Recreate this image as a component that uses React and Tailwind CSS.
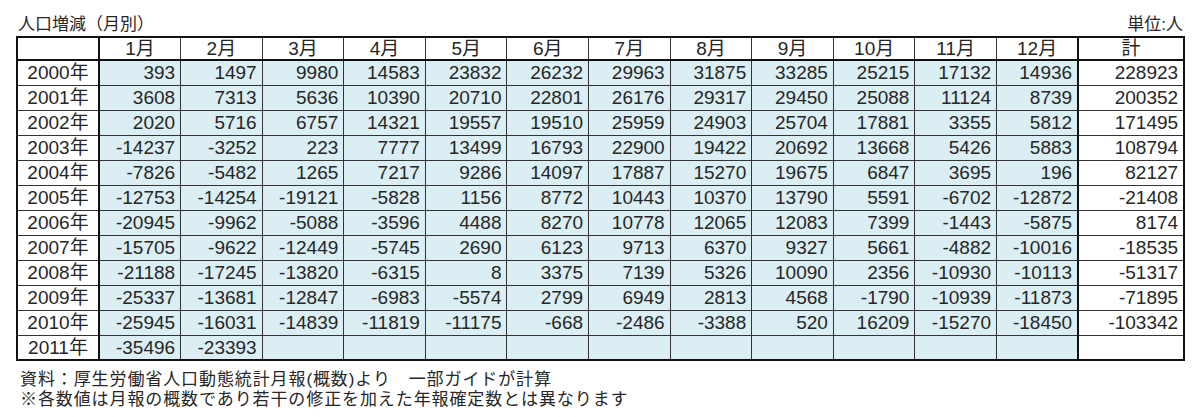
const months = ["1月", "2月", "3月", "4月", "5月", "6月", "7月", "8月", "9月", "10月", "11月", "12月"];

const rows = [
  ["2000年", [393, 1497, 9980, 14583, 23832, 26232, 29963, 31875, 33285, 25215, 17132, 14936], 228923],
  ["2001年", [3608, 7313, 5636, 10390, 20710, 22801, 26176, 29317, 29450, 25088, 11124, 8739], 200352],
  ["2002年", [2020, 5716, 6757, 14321, 19557, 19510, 25959, 24903, 25704, 17881, 3355, 5812], 171495],
  ["2003年", [-14237, -3252, 223, 7777, 13499, 16793, 22900, 19422, 20692, 13668, 5426, 5883], 108794],
  ["2004年", [-7826, -5482, 1265, 7217, 9286, 14097, 17887, 15270, 19675, 6847, 3695, 196], 82127],
  ["2005年", [-12753, -14254, -19121, -5828, 1156, 8772, 10443, 10370, 13790, 5591, -6702, -12872], -21408],
  ["2006年", [-20945, -9962, -5088, -3596, 4488, 8270, 10778, 12065, 12083, 7399, -1443, -5875], 8174],
  ["2007年", [-15705, -9622, -12449, -5745, 2690, 6123, 9713, 6370, 9327, 5661, -4882, -10016], -18535],
  ["2008年", [-21188, -17245, -13820, -6315, 8, 3375, 7139, 5326, 10090, 2356, -10930, -10113], -51317],
  ["2009年", [-25337, -13681, -12847, -6983, -5574, 2799, 6949, 2813, 4568, -1790, -10939, -11873], -71895],
  ["2010年", [-25945, -16031, -14839, -11819, -11175, -668, -2486, -3388, 520, 16209, -15270, -18450], -103342],
  ["2011年", [-35496, -23393, null, null, null, null, null, null, null, null, null, null], null],
];

const font = { fontFamily: '"Liberation Sans", "Noto Sans CJK JP", sans-serif' };

export default function App() {
  return (
    <div className="w-[1200px] h-[417px] bg-white text-[#262626] overflow-hidden" style={font}>
      <div className="pl-4 pr-[17px] pt-[10px]">
        <div className="flex justify-between items-end h-[26px] text-[17px] leading-none pb-[3px]">
          <span className="pl-[2px]">人口増減（月別）</span>
          <span>単位:人</span>
        </div>
        <table className="table-fixed border-collapse border-2 border-[#111] w-[1167px] text-[19px] leading-none">
          <colgroup>
            <col className="w-[82px]" />
            {months.map((m) => (
              <col key={m} className="w-[81.6px]" />
            ))}
            <col className="w-[106px]" />
          </colgroup>
          <thead>
            <tr className="h-[23px] border-b-2 border-[#111]">
              <th className="border-r-2 border-[#111] font-normal"></th>
              {months.map((m, i) => (
                <th
                  key={m}
                  className={
                    i === 11
                      ? "border-r-2 border-[#111] font-normal text-center"
                      : "border-r border-[#333] font-normal text-center"
                  }
                >
                  {m}
                </th>
              ))}
              <th className="font-normal text-center">計</th>
            </tr>
          </thead>
          <tbody>
            {rows.map(([year, vals, total]) => (
              <tr key={year} className="h-[25px] border-b border-[#333]">
                <td className="border-r-2 border-[#111] text-center bg-white">{year}</td>
                {vals.map((v, i) => (
                  <td
                    key={i}
                    className={
                      i === 11
                        ? "border-r-2 border-[#111] bg-[#daeef3] text-right pr-[5px]"
                        : "border-r border-[#333] bg-[#daeef3] text-right pr-[5px]"
                    }
                  >
                    {v === null ? "" : v}
                  </td>
                ))}
                <td className="bg-white text-right pr-[5px]">{total === null ? "" : total}</td>
              </tr>
            ))}
          </tbody>
        </table>
        <div className="pl-[4px] pt-[9px] text-[17px] leading-[20px] tracking-[0.9px]">
          <div>資料：厚生労働省人口動態統計月報(概数)より　一部ガイドが計算</div>
          <div>※各数値は月報の概数であり若干の修正を加えた年報確定数とは異なります</div>
        </div>
      </div>
    </div>
  );
}
